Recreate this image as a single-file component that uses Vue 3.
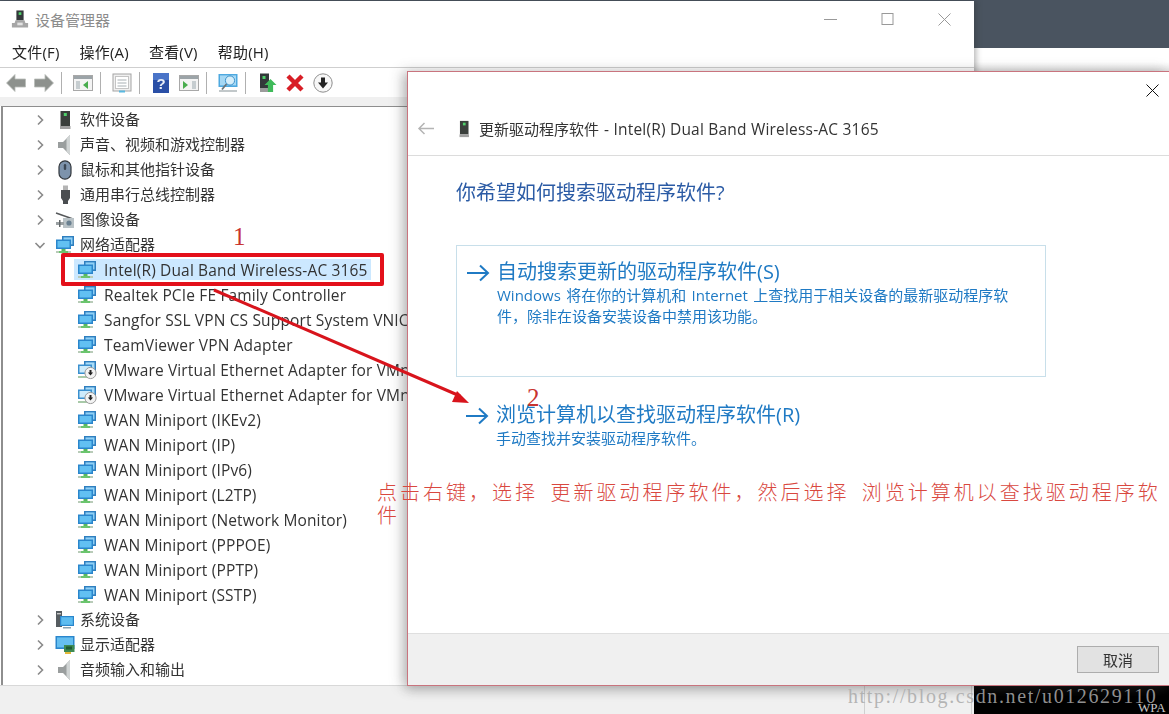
<template>
  <div class="desktop">
    <!-- hidden icon sheet -->
    <svg class="sheet" width="0" height="0">
      <defs>
        <symbol id="i-manager" viewBox="0 0 20 20">
          <rect x="6" y="0.500" width="8" height="11" fill="#33383a" />
          <rect x="8.500" y="2.500" width="3" height="3" fill="#4fd06a" />
          <path d="M5 11.500h10l1 3h3v5H1v-5h3z" fill="#a6a6a6" />
          <rect x="7" y="14" width="6" height="3" fill="#e2e2e2" />
        </symbol>
        <symbol id="i-chip" viewBox="0 0 20 20">
          <rect x="5.500" y="1" width="9.500" height="15" fill="#3a3f3c" />
          <rect x="8.800" y="3" width="3" height="3" fill="#4fd06a" />
          <rect x="5" y="16" width="10.500" height="3" fill="#a0a0a0" />
        </symbol>
        <symbol id="i-speaker" viewBox="0 0 20 20">
          <path d="M3 7h5l7-7v20l-7-7H3z" fill="#9a9e9e" />
          <path d="M11.500 3.500l3.500-3.500v20l-3.500-3.500z" fill="#d0d4d4" />
        </symbol>
        <symbol id="i-mouse" viewBox="0 0 20 20">
          <rect x="4" y="0.800" width="12" height="18.400" rx="6" fill="#7d93ac" stroke="#33383d" stroke-width="1.200" />
          <rect x="8.800" y="4" width="2.400" height="6" rx="1.200" fill="#3c4856" />
        </symbol>
        <symbol id="i-usb" viewBox="0 0 20 20">
          <rect x="8" y="0.500" width="5" height="5" fill="#b4b4b4" />
          <path d="M6 5h9v8l-2 3v3H8v-3l-2-3z" fill="#4a4d50" />
        </symbol>
        <symbol id="i-camera" viewBox="0 0 20 20">
          <path d="M1 3l17 6" stroke="#55585a" stroke-width="1.400" />
          <rect x="8" y="8" width="11" height="10" fill="#b9c2c6" />
          <circle cx="14" cy="13" r="2.600" fill="#6a8090" />
          <rect x="1" y="12" width="8" height="3" fill="#9aa0a2" />
          <rect x="4" y="10" width="1.500" height="7" fill="#63686a" />
        </symbol>
        <symbol id="i-net" viewBox="0 0 20 20">
          <rect x="7" y="1" width="12" height="10" fill="#2f7fbf" />
          <rect x="8.500" y="2.400" width="9" height="7" fill="#8fd0f5" />
          <rect x="1" y="4.500" width="15" height="9.500" fill="#2a86cc" />
          <rect x="2.500" y="6" width="12" height="6.500" fill="#62c0f2" />
          <rect x="6.500" y="14" width="4" height="2" fill="#59b85f" />
          <rect x="1" y="16" width="15" height="2" fill="#b8cbb8" />
          <rect x="4" y="16" width="9" height="2" fill="#6bc56e" />
        </symbol>
        <symbol id="i-netdown" viewBox="0 0 20 20">
          <rect x="7" y="1" width="12" height="10" fill="#2f7fbf" />
          <rect x="8.500" y="2.400" width="9" height="7" fill="#a9dcf8" />
          <rect x="1" y="4.500" width="14" height="9.500" fill="#3a90cf" />
          <rect x="2.500" y="6" width="11" height="6.500" fill="#cdebfb" />
          <rect x="1" y="16" width="10" height="2" fill="#a8c9a8" />
          <circle cx="13.500" cy="13" r="5.600" fill="#f3f3f3" stroke="#9a9a9a" />
          <path d="M12.500 10h2v2.500h1.600l-2.600 3-2.600-3h1.600z" fill="#222" />
        </symbol>
        <symbol id="i-system" viewBox="0 0 20 20">
          <rect x="1" y="1" width="6" height="16" fill="#565c60" />
          <rect x="2" y="3" width="4" height="1.400" fill="#c8c8c8" />
          <rect x="5" y="6" width="14" height="10" fill="#2a86cc" />
          <rect x="6.200" y="7.200" width="11.600" height="7.600" fill="#5dbcf0" />
          <rect x="8" y="17" width="8" height="1.500" fill="#8aa2b0" />
        </symbol>
        <symbol id="i-display" viewBox="0 0 20 20">
          <rect x="0.500" y="1" width="19" height="13" fill="#2a86cc" />
          <rect x="2" y="2.400" width="16" height="10" fill="#66bff0" />
          <rect x="9" y="10" width="10.500" height="7" fill="#3e8a52" />
          <rect x="11" y="11.500" width="6" height="3" fill="#1f5a32" />
          <rect x="10" y="17" width="6" height="2" fill="#e4b93a" />
        </symbol>

        <symbol id="t-back" viewBox="0 0 20 20">
          <path d="M0.500 10L9 1.500V6h10.500v8H9v4.500z" fill="#8d918d" stroke="#b9bcb9" stroke-width=".8" />
        </symbol>
        <symbol id="t-forward" viewBox="0 0 20 20">
          <path d="M19.500 10L11 1.500V6H0.500v8H11v4.500z" fill="#8d918d" stroke="#b9bcb9" stroke-width=".8" />
        </symbol>
        <symbol id="t-panelback" viewBox="0 0 20 20">
          <rect x="0.500" y="2.500" width="19" height="15" fill="#f4f4f4" stroke="#a8a8a8" />
          <rect x="1" y="3" width="18" height="3" fill="#9ca4a8" />
          <rect x="3" y="8" width="4" height="8" fill="#c6cdd0" />
          <path d="M15 8v8l-5-4z" fill="#49ad4e" />
        </symbol>
        <symbol id="t-sheet" viewBox="0 0 20 20">
          <rect x="1" y="1" width="18" height="17" fill="#f0f0f0" stroke="#a4a4a4" />
          <rect x="3.500" y="3.500" width="13" height="12" fill="#fff" stroke="#c4c4c4" />
          <path d="M5.500 7h9M5.500 10h9M5.500 13h9" stroke="#a8b0b4" />
          <rect x="7" y="17.500" width="6" height="2" fill="#59b8e0" />
        </symbol>
        <symbol id="t-help" viewBox="0 0 20 20">
          <rect x="2" y="0" width="16" height="20" fill="#2a4fa6" />
          <rect x="2" y="0" width="16" height="7" fill="#4a74c8" />
          <text x="10" y="15.500" font-size="15" font-weight="700" fill="#e8eef8" text-anchor="middle" font-family="Liberation Sans, sans-serif">?</text>
        </symbol>
        <symbol id="t-panelplay" viewBox="0 0 20 20">
          <rect x="0.500" y="2.500" width="19" height="15" fill="#f4f4f4" stroke="#a8a8a8" />
          <rect x="1" y="3" width="18" height="3" fill="#9ca4a8" />
          <path d="M4 8v8l5-4z" fill="#49ad4e" />
          <rect x="13" y="8" width="4" height="8" fill="#c6cdd0" />
        </symbol>
        <symbol id="t-monitor" viewBox="0 0 20 20">
          <rect x="0.500" y="1" width="19" height="13" fill="#4ea9e0" />
          <rect x="2" y="2.400" width="16" height="10" fill="#a6d8f4" />
          <circle cx="12" cy="7.500" r="4.600" fill="#d6eefa" stroke="#3d94cc" />
          <path d="M8.500 11L4 16.500" stroke="#6c7478" stroke-width="1.800" />
          <path d="M1 18h18" stroke="#a8b0b4" stroke-width="1.400" />
        </symbol>
        <symbol id="t-update" viewBox="0 0 20 20">
          <rect x="3" y="0.500" width="9" height="15" fill="#33383a" />
          <rect x="5.500" y="3" width="3" height="3" fill="#4fd06a" />
          <rect x="3" y="15.500" width="9" height="3.500" fill="#9c9c9c" />
          <path d="M13.500 6l6 6h-3.400v7h-5.200v-7H7.500z" fill="#3fba5a" />
        </symbol>
        <symbol id="t-remove" viewBox="0 0 20 20">
          <path d="M3 3l14 14M17 3L3 17" stroke="#d81e26" stroke-width="4.400" />
        </symbol>
        <symbol id="t-down" viewBox="0 0 20 20">
          <circle cx="10" cy="10" r="9.200" fill="#f7f7f7" stroke="#8e8e8e" />
          <path d="M8 4.500h4v5h3l-5 6-5-6h3z" fill="#222" />
        </symbol>
      </defs>
    </svg>

    <!-- device manager window -->
    <section class="manager">
      <header class="titlebar">
        <svg class="title-icon" width="18" height="18"><use href="#i-manager" /></svg>
        <span class="title-text">设备管理器</span>
        <div class="win-controls">
          <svg width="13" height="13" viewBox="0 0 13 13"><path d="M0 6.500h13" stroke="#999" /></svg>
          <svg width="13" height="13" viewBox="0 0 13 13"><rect x="1" y=".5" width="11" height="11" fill="none" stroke="#999" /></svg>
          <svg width="13" height="13" viewBox="0 0 13 13"><path d="M.5 .5l12 12M12.500 .5l-12 12" stroke="#999" /></svg>
        </div>
      </header>
      <nav class="menubar">
        <span v-for="m in menus" :key="m">{{ m }}</span>
      </nav>
      <div class="toolbar">
        <template v-for="(t, i) in tools" :key="i">
          <span v-if="t === '|'" class="tool-sep"></span>
          <svg v-else class="tool" width="20" height="20"><use :href="'#t-' + t" /></svg>
        </template>
      </div>
      <div class="strip"></div>
      <div class="tree">
        <div v-for="r in rows" :key="r.text" class="row" :class="{ child: r.child }">
          <svg v-if="!r.child" class="chev" width="12" height="12" viewBox="0 0 12 12">
            <path :d="r.open ? 'M1.500 4l4.500 4.500L10.500 4' : 'M4 1.500L8.500 6 4 10.500'" fill="none" stroke="#8a8a8a" stroke-width="1.600" />
          </svg>
          <div class="node" :class="{ selected: r.selected }">
            <svg class="node-icon" width="20" height="20"><use :href="'#i-' + r.icon" /></svg>
            <span class="label">{{ r.text }}</span>
          </div>
        </div>
      </div>
      <footer class="statusbar">
        <i class="cell one"></i>
        <i class="cell two"></i>
      </footer>
    </section>

    <!-- black console peeking out at the bottom right -->
    <div class="console">WPA</div>

    <!-- update driver dialog -->
    <section class="dialog">
      <svg class="dialog-close" width="13" height="13" viewBox="0 0 13 13"><path d="M.5 .5l12 12M12.500 .5l-12 12" stroke="#111" /></svg>
      <header class="dialog-head">
        <svg width="18" height="13" viewBox="0 0 18 13"><path d="M17 6.500H2M7.500 1L2 6.500 7.500 12" fill="none" stroke="#b4b4b4" stroke-width="1.500" /></svg>
        <svg class="head-icon" width="18" height="18"><use href="#i-chip" /></svg>
        <span class="head-cn">更新驱动程序软件</span>
        <span class="head-en">- Intel(R) Dual Band Wireless-AC 3165</span>
      </header>
      <div class="dialog-body">
        <h1>你希望如何搜索驱动程序软件?</h1>
        <div class="option boxed">
          <svg class="go" width="24" height="18" viewBox="0 0 24 18"><path d="M1 9h21M14 1.500L22 9l-8 7.500" fill="none" stroke="#1f7ac4" stroke-width="2" /></svg>
          <div>
            <div class="option-title">自动搜索更新的驱动程序软件(S)</div>
            <p>Windows 将在你的计算机和 Internet 上查找用于相关设备的最新驱动程序软件&#xFF0C;除非在设备安装设备中禁用该功能。</p>
          </div>
        </div>
        <div class="option">
          <svg class="go" width="24" height="18" viewBox="0 0 24 18"><path d="M1 9h21M14 1.500L22 9l-8 7.500" fill="none" stroke="#1f7ac4" stroke-width="2" /></svg>
          <div>
            <div class="option-title">浏览计算机以查找驱动程序软件(R)</div>
            <p>手动查找并安装驱动程序软件。</p>
          </div>
        </div>
      </div>
      <footer class="dialog-foot">
        <button class="cancel">取消</button>
      </footer>
    </section>

    <!-- hand-added annotations -->
    <div class="mark-box"></div>
    <svg class="mark-arrow" width="300" height="140" viewBox="0 0 300 140">
      <path d="M2 2L248 108" stroke="#d8141c" stroke-width="3" />
      <path d="M257 115l-17-1 5-11z" fill="#d8141c" />
    </svg>
    <span class="mark-num first">1</span>
    <span class="mark-num second">2</span>
    <p class="mark-note">点击右键&#xFF0C;选择 更新驱动程序软件&#xFF0C;然后选择 浏览计算机以查找驱动程序软件</p>
    <span class="watermark">http://blog.csdn.net/u012629110</span>
  </div>
</template>

<script setup>
const menus = ['文件(F)', '操作(A)', '查看(V)', '帮助(H)']

const tools = [
  'back', 'forward', '|', 'panelback', '|', 'sheet', '|', 'help', 'panelplay',
  '|', 'monitor', '|', 'update', 'remove', 'down'
]

const rows = [
  { text: '软件设备', icon: 'chip' },
  { text: '声音、视频和游戏控制器', icon: 'speaker' },
  { text: '鼠标和其他指针设备', icon: 'mouse' },
  { text: '通用串行总线控制器', icon: 'usb' },
  { text: '图像设备', icon: 'camera' },
  { text: '网络适配器', icon: 'net', open: true },
  { text: 'Intel(R) Dual Band Wireless-AC 3165', icon: 'net', child: true, selected: true },
  { text: 'Realtek PCIe FE Family Controller', icon: 'net', child: true },
  { text: 'Sangfor SSL VPN CS Support System VNIC', icon: 'net', child: true },
  { text: 'TeamViewer VPN Adapter', icon: 'net', child: true },
  { text: 'VMware Virtual Ethernet Adapter for VMnet1', icon: 'netdown', child: true },
  { text: 'VMware Virtual Ethernet Adapter for VMnet8', icon: 'netdown', child: true },
  { text: 'WAN Miniport (IKEv2)', icon: 'net', child: true },
  { text: 'WAN Miniport (IP)', icon: 'net', child: true },
  { text: 'WAN Miniport (IPv6)', icon: 'net', child: true },
  { text: 'WAN Miniport (L2TP)', icon: 'net', child: true },
  { text: 'WAN Miniport (Network Monitor)', icon: 'net', child: true },
  { text: 'WAN Miniport (PPPOE)', icon: 'net', child: true },
  { text: 'WAN Miniport (PPTP)', icon: 'net', child: true },
  { text: 'WAN Miniport (SSTP)', icon: 'net', child: true },
  { text: '系统设备', icon: 'system' },
  { text: '显示适配器', icon: 'display' },
  { text: '音频输入和输出', icon: 'speaker' }
]
</script>

<style scoped>
.desktop {
  position: relative;
  width: 1169px;
  height: 714px;
  overflow: hidden;
  font-family: "Open Sans", "Noto Sans CJK SC", sans-serif;
  color: #333;
  background: linear-gradient(#4a5460 0, #4a5460 48px, #fff 48px, #fff 62px, #e6e6e6 71px);
}

.sheet {
  position: absolute;
}

/* windows on the desktop */
.manager {
  position: absolute;
  left: 0;
  top: 1px;
  width: 974px;
  height: 713px;
  display: flex;
  flex-direction: column;
  background: #fff;
  box-shadow: 2px 0 6px rgba(40, 40, 40, 0.35);
}

.titlebar {
  display: flex;
  align-items: center;
  height: 38px;
  box-sizing: border-box;
  padding: 0 0 2px 11px;
  flex: none;
}

.title-icon {
  margin-right: 6px;
}

.title-text {
  font-size: 15px;
  color: #8c8c8c;
}

.win-controls {
  margin-left: auto;
  display: flex;
  gap: 44px;
  padding-right: 23px;
}

.menubar {
  display: flex;
  gap: 20px;
  height: 29px;
  padding: 2px 0 0 12px;
  font-size: 15px;
  letter-spacing: 0.200px;
  color: #222;
  border-bottom: 1px solid #cfcfcf;
  box-sizing: border-box;
  flex: none;
  filter: blur(0.3px);
}

.toolbar {
  display: flex;
  align-items: center;
  gap: 8px;
  height: 29px;
  padding: 1px 0 0 6px;
  box-sizing: border-box;
  flex: none;
  filter: blur(0.4px);
}

.tool-sep {
  width: 1px;
  height: 22px;
  margin: 0 3px 0 -1px;
  background: #b0b0b0;
}

.strip {
  height: 9px;
  flex: none;
  background: #f0f0f0;
}

.tree {
  flex: 1;
  min-height: 0;
  box-sizing: border-box;
  margin-left: 1px;
  border-left: 2px solid #8e8e8e;
  border-top: 1px solid #8e8e8e;
  overflow: hidden;
  font-size: 15.500px;
  letter-spacing: 0.150px;
  filter: blur(0.35px);
}

.row {
  display: flex;
  align-items: center;
  height: 25px;
  padding-left: 31px;
  white-space: nowrap;
}

.row.child {
  padding-left: 71px;
}

.chev {
  flex: none;
  margin-right: 9px;
}

.node {
  display: flex;
  align-items: center;
  height: 21px;
  padding-right: 3px;
}

.row.child .node {
  padding-left: 3px;
}

.node.selected {
  background: #cce8ff;
}

.node-icon {
  flex: none;
  margin-right: 8px;
}

.row:not(.child) .label {
  font-size: 15px;
  letter-spacing: 0;
  margin: -2px 0 0 -3px;
}

.row.child .node-icon {
  margin-right: 7px;
}

.statusbar {
  position: relative;
  height: 28px;
  flex: none;
  border-top: 1px solid #d8d8d8;
  background: #f0f0f0;
}

.cell {
  position: absolute;
  top: 0;
  bottom: 0;
  width: 1px;
  background: #d0d0d0;
}

.cell.one {
  left: 864px;
}

.cell.two {
  left: 971px;
}

.console {
  position: absolute;
  left: 974px;
  top: 686px;
  width: 195px;
  height: 28px;
  box-sizing: border-box;
  padding: 15px 0 0 164px;
  background: #000;
  color: #c8c8c8;
  font: 13px/13px "Liberation Serif", serif;
  overflow: hidden;
}

.dialog {
  position: absolute;
  left: 407px;
  top: 71px;
  width: 762px;
  height: 615px;
  box-sizing: border-box;
  display: flex;
  flex-direction: column;
  background: #fff;
  border: 1px solid #c9747e;
  border-right: none;
  box-shadow: -5px 0 12px rgba(60, 60, 60, 0.28), 0 5px 10px rgba(60, 60, 60, 0.22);
}

.dialog-close {
  position: absolute;
  right: 10px;
  top: 12px;
}

.dialog-head {
  display: flex;
  align-items: center;
  height: 84px;
  padding: 30px 0 0 9px;
  box-sizing: border-box;
  border-bottom: 1px solid #dcdcdc;
  color: #333;
  flex: none;
  filter: blur(0.3px);
}

.head-icon {
  margin: 0 6px 0 20px;
}

.head-cn {
  font-size: 15px;
}

.head-en {
  margin-left: 5px;
  font-size: 15.500px;
  letter-spacing: 0.200px;
}

.dialog-body {
  flex: 1;
  padding: 24px 0 0 48px;
  filter: blur(0.3px);
}

.dialog-body h1 {
  margin: 0 0 39px;
  font-size: 20px;
  line-height: 26px;
  font-weight: 400;
  color: #2b5ba5;
}

.option {
  display: flex;
  width: 590px;
  box-sizing: border-box;
  gap: 7px;
  padding: 12px 0 0 9px;
  color: #1f7ac4;
}

.option.boxed {
  height: 132px;
  border: 1px solid #c8dfea;
  margin-bottom: 12px;
}

.go {
  flex: none;
  margin-top: 6px;
}

.option-title {
  font-size: 20px;
  line-height: 28px;
}

.option p {
  margin: -1px 0 0;
  width: 520px;
  font-size: 15px;
  line-height: 21px;
  word-spacing: 1.500px;
}

.dialog-foot {
  display: flex;
  justify-content: flex-end;
  align-items: flex-start;
  height: 52px;
  flex: none;
  box-sizing: border-box;
  padding: 12px 10px 0 0;
  background: #f0f0f0;
  border-top: 1px solid #dfdfdf;
}

.cancel {
  width: 82px;
  height: 27px;
  padding: 0;
  font-family: inherit;
  font-size: 15px;
  color: #333;
  background: #e2e2e2;
  border: 1px solid #adadad;
  filter: blur(0.3px);
}

/* annotations drawn over the screenshot */
.mark-box {
  position: absolute;
  left: 61px;
  top: 253px;
  width: 323px;
  height: 33px;
  box-sizing: border-box;
  border: 4px solid #e3101a;
  border-radius: 2px;
}

.mark-arrow {
  position: absolute;
  left: 212px;
  top: 288px;
}

.mark-num {
  position: absolute;
  font: 25px/26px "Liberation Serif", serif;
  color: #c8332f;
}

.mark-num.first {
  left: 233px;
  top: 224px;
}

.mark-num.second {
  left: 527px;
  top: 385px;
}

.mark-note {
  position: absolute;
  left: 377px;
  top: 480px;
  width: 790px;
  margin: 0;
  font-family: "Noto Sans CJK SC", sans-serif;
  font-size: 20px;
  font-weight: 300;
  line-height: 23px;
  letter-spacing: 3px;
  word-spacing: 5px;
  color: #d9483f;
}

.watermark {
  position: absolute;
  left: 848px;
  top: 684px;
  font: 20px/24px "Liberation Serif", serif;
  letter-spacing: 1.620px;
  color: rgba(170, 170, 170, 0.85);
  white-space: nowrap;
}
</style>
